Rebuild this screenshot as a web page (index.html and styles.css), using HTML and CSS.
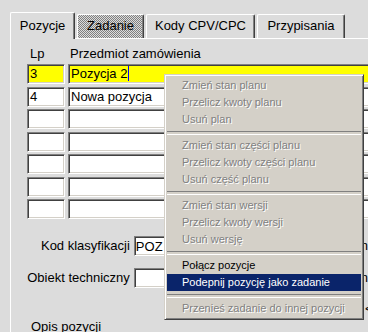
FILE: index.html
```html
<!DOCTYPE html>
<html>
<head>
<meta charset="utf-8">
<link rel="stylesheet" href="styles.css">
</head>
<body>
<div class="tabs">
  <div class="tab active w1">Pozycje</div>
  <div class="tab hatched w2">Zadanie</div>
  <div class="tab w3">Kody CPV/CPC</div>
  <div class="tab w4">Przypisania</div>
</div>
<div class="panel">
  <div class="head">
    <span class="h-lp">Lp</span>
    <span class="h-name">Przedmiot zamówienia</span>
  </div>
  <div class="grid">
    <div class="cell lp sel">3</div><div class="cell name sel">Pozycja 2<span class="caret"></span></div>
    <div class="cell lp">4</div><div class="cell name">Nowa pozycja</div>
    <div class="cell lp"></div><div class="cell name"></div>
    <div class="cell lp"></div><div class="cell name"></div>
    <div class="cell lp"></div><div class="cell name"></div>
    <div class="cell lp"></div><div class="cell name"></div>
    <div class="cell lp"></div><div class="cell name"></div>
  </div>
  <div class="field kod">
    <label class="lbl">Kod klasyfikacji</label>
    <div class="input">POZ</div>
    <span class="frag">n</span>
  </div>
  <div class="field obiekt">
    <label class="lbl">Obiekt techniczny</label>
    <div class="input"></div>
    <span class="frag">n</span>
  </div>
  <div class="btnrow"><span class="frag">&lt;</span></div>
  <div class="opis">Opis pozycji</div>
</div>
<div class="menu">
  <div class="item dis">Zmień stan planu</div>
  <div class="item dis">Przelicz kwoty planu</div>
  <div class="item dis">Usuń plan</div>
  <div class="sep"></div>
  <div class="item dis">Zmień stan części planu</div>
  <div class="item dis">Przelicz kwoty części planu</div>
  <div class="item dis">Usuń część planu</div>
  <div class="sep"></div>
  <div class="item dis">Zmień stan wersji</div>
  <div class="item dis">Przelicz kwoty wersji</div>
  <div class="item dis">Usuń wersję</div>
  <div class="sep"></div>
  <div class="item">Połącz pozycje</div>
  <div class="item hl">Podepnij pozycję jako zadanie</div>
  <div class="sep"></div>
  <div class="item dis">Przenieś zadanie do innej pozycji</div>
</div>
</body>
</html>
```
FILE: styles.css
```css
* { box-sizing: border-box; }
html, body { margin: 0; padding: 0; }
body {
  width: 368px;
  height: 332px;
  overflow: hidden;
  position: relative;
  background: #dcdcdc;
  font-family: "Liberation Sans", Arial, sans-serif;
  font-size: 13px;
  color: #000;
}
.tabs {
  display: flex;
  align-items: flex-end;
  height: 38px;
  padding-left: 10px;
}
.tab {
  height: 24px;
  padding-top: 3px;
  line-height: 16px;
  text-align: center;
  white-space: nowrap;
  background: #dcdcdc;
  border-left: 1px solid #fff;
  border-top: 1px solid #fff;
  border-right: 1px solid #404040;
  box-shadow: inset -1px 0 #808080;
  border-radius: 2px 2px 0 0;
  margin-left: 2px;
}
.tab.active {
  height: 27px;
  padding-top: 5px;
  margin-bottom: -1px;
  margin-left: 0;
  position: relative;
  z-index: 1;
}
.tab.hatched {
  background-image: repeating-conic-gradient(#808080 0 25%, #dcdcdc 0 50%);
  background-size: 2px 2px;
}
.w1 { width: 65px; }
.w2 { width: 67px; }
.w3 { width: 109px; }
.w4 { width: 88px; }
.panel {
  margin-left: 10px;
  border-top: 1px solid #fff;
  border-left: 1px solid #fff;
  height: 294px;
}
.head {
  display: grid;
  grid-template-columns: 38px 320px;
  column-gap: 3px;
  margin: 7px 0 0 16px;
  height: 16px;
  line-height: 16px;
  white-space: nowrap;
}
.h-lp { padding-left: 3px; }
.h-name { padding-left: 2px; }
.grid {
  display: grid;
  grid-template-columns: 38px 320px;
  grid-auto-rows: 20px;
  column-gap: 3px;
  row-gap: 2.5px;
  margin: 2px 0 0 16px;
}
.cell {
  background: #fff;
  border: 1px solid;
  border-color: #808080 #fff #fff #808080;
  box-shadow: inset 1px 1px #404040, inset -1px -1px #d4d0c8;
  padding: 1px 0 0 2px;
  line-height: 16px;
  white-space: nowrap;
  overflow: hidden;
}
.cell.sel { background: #ffff00; }
.caret {
  display: inline-block;
  width: 1px;
  height: 15px;
  background: #0000ff;
  vertical-align: -3px;
  margin-left: 1px;
}
.field {
  display: flex;
  align-items: center;
  height: 20px;
  white-space: nowrap;
}
.kod { margin-top: 17px; }
.obiekt { margin-top: 12px; }
.lbl {
  width: 121px;
  text-align: right;
  line-height: 20px;
  margin-right: 4px;
}
.input {
  width: 120px;
  height: 20px;
  background: #fff;
  border: 1px solid;
  border-color: #808080 #fff #fff #808080;
  box-shadow: inset 1px 1px #404040, inset -1px -1px #d4d0c8;
  padding: 1px 0 0 1px;
  line-height: 17px;
}
.field .frag { margin-left: 109px; line-height: 20px; }
.btnrow {
  margin-top: 13px;
  height: 16px;
  line-height: 16px;
  padding-left: 354px;
}
.opis {
  margin-top: 2px;
  padding-left: 20px;
  line-height: 16px;
}
.menu {
  position: absolute;
  left: 164px;
  top: 74px;
  width: 200px;
  background: #d4d0c8;
  border: 1px solid;
  border-color: #d4d0c8 #404040 #404040 #d4d0c8;
  box-shadow: inset 1px 1px #fff, inset -1px -1px #808080;
  padding: 2px;
  font-size: 11px;
  z-index: 5;
}
.item {
  height: 17px;
  line-height: 17px;
  padding-left: 15px;
  white-space: nowrap;
}
.item.dis {
  color: #808080;
  text-shadow: 1px 1px 0 #fff;
}
.item.hl {
  background: #0a246a;
  color: #fff;
}
.sep {
  height: 9px;
  padding-top: 3px;
}
.sep::before {
  content: "";
  display: block;
  height: 2px;
  border-top: 1px solid #808080;
  border-bottom: 1px solid #fff;
}
```
